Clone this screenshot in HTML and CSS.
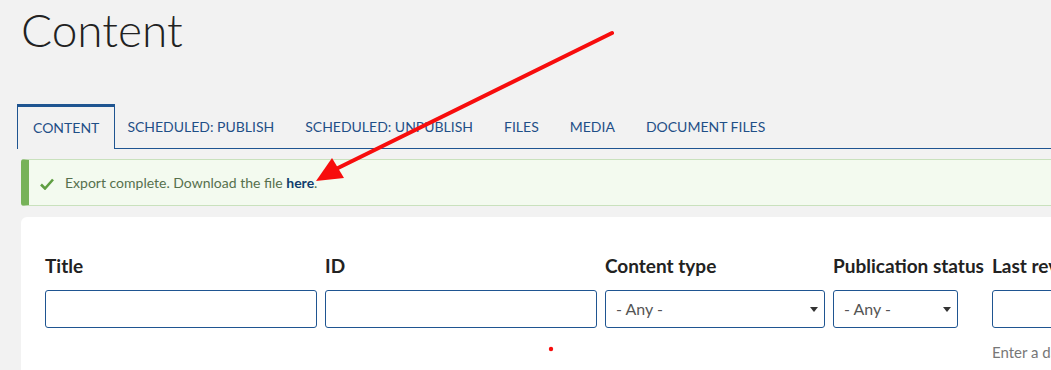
FILE: index.html
```html
<!DOCTYPE html>
<html lang="en">
<head>
    <meta charset="UTF-8">
    <meta name="viewport" content="width=device-width, initial-scale=1.0">
    <title>Content</title>
    <link rel="stylesheet" href="styles.css">
</head>
<body>
    <div class="page">
        <h1 class="page-title">Content</h1>

        <nav class="tabs">
            <a class="tab active" href="#">Content</a>
            <a class="tab" href="#">Scheduled: Publish</a>
            <a class="tab" href="#">Scheduled: Unpublish</a>
            <a class="tab" href="#">Files</a>
            <a class="tab" href="#">Media</a>
            <a class="tab" href="#">Document files</a>
        </nav>

        <div class="message">
            <svg class="check" width="14" height="12" viewBox="0 0 14 12">
                <path d="M1 6.5 L5 10.5 L13 1.5" fill="none" stroke="#5f9e42" stroke-width="2.6"/>
            </svg>
            <span>Export complete. Download the file <a href="#">here</a>.</span>
        </div>

        <div class="card">
            <div class="filters">
                <div class="field">
                    <label>Title</label>
                    <input type="text" class="w-title">
                </div>
                <div class="field">
                    <label>ID</label>
                    <input type="text" class="w-title">
                </div>
                <div class="field">
                    <label>Content type</label>
                    <div class="select w-type">- Any -</div>
                </div>
                <div class="field">
                    <label>Publication status</label>
                    <div class="select w-status">- Any -</div>
                </div>
                <div class="field">
                    <label>Last revised</label>
                    <input type="text" class="w-date">
                    <div class="hint">Enter a date</div>
                </div>
            </div>
        </div>

        <!-- annotation drawn over the screenshot -->
        <svg class="annotation" width="1051" height="370">
            <line x1="612" y1="33" x2="336" y2="169" stroke="#f70d0d" stroke-width="4" stroke-linecap="round"/>
            <polygon points="316,181 332,158 344,178" fill="#f70d0d"/>
            <circle cx="551" cy="349" r="2.2" fill="#f70d0d"/>
        </svg>
    </div>
</body>
</html>
```

FILE: styles.css
```css
body {
    margin: 0;
    background-color: #f2f2f2;
    font-family: 'Lato', sans-serif;
    color: #222;
    overflow: hidden;
}

.page {
    position: relative;
    height: 370px;
    overflow: hidden;
}

.page-title {
    margin: 0;
    padding: 2px 0 0 21px;
    font-size: 46px;
    font-weight: 300;
    line-height: 56px;
    color: #222;
}

.tabs {
    display: flex;
    margin: 46px 0 0 17px;
    border-bottom: 1px solid #1f5591;
}

.tab {
    padding: 0 19px 0 12px;
    height: 44px;
    line-height: 46px;
    font-size: 14px;
    text-transform: uppercase;
    text-decoration: none;
    color: #1f4f87;
    white-space: nowrap;
}

.tab.active {
    border: 1px solid #1f5591;
    border-top: 3px solid #1f5591;
    border-bottom: none;
    height: 42px;
    margin-bottom: -1px;
    background-color: #f2f2f2;
    padding: 0 15px;
    line-height: 42px;
}

.message {
    display: flex;
    align-items: center;
    gap: 11px;
    margin: 10px 0 0 21px;
    height: 45px;
    padding-left: 11px;
    background-color: #f3faef;
    border: 1px solid #c9e1bd;
    border-left: 8px solid #77b259;
    border-right: none;
    border-radius: 3px 0 0 3px;
    font-size: 14px;
    color: #56704d;
}

.message a {
    color: #0f3d6d;
    font-weight: 700;
    text-decoration: none;
}

.check {
    margin-top: 2px;
}

.card {
    margin: 11px 0 0 21px;
    height: 200px;
    background-color: white;
    border-radius: 6px 0 0 0;
    padding: 37px 0 0 24px;
}

.filters {
    display: flex;
    gap: 8px;
}

.field {
    display: flex;
    flex-direction: column;
    flex-shrink: 0;
}

.field label {
    font-size: 19px;
    font-weight: 700;
    line-height: 24px;
    margin-bottom: 12px;
    white-space: nowrap;
}

input, .select {
    box-sizing: border-box;
    height: 38px;
    border: 1px solid #1f5591;
    border-radius: 3px;
    background-color: white;
    font-family: 'Lato', sans-serif;
}

.w-title {
    width: 272px;
}

.w-type {
    width: 220px;
}

.w-status {
    width: 125px;
}

.w-date {
    width: 200px;
}

.select {
    position: relative;
    padding-left: 10px;
    line-height: 36px;
    font-size: 16px;
    color: #555;
}

.select::after {
    content: "";
    position: absolute;
    right: 6px;
    top: 16px;
    border-left: 4px solid transparent;
    border-right: 4px solid transparent;
    border-top: 5px solid #333;
}

.hint {
    margin-top: 15px;
    font-size: 15px;
    color: #777;
    white-space: nowrap;
}

.annotation {
    position: absolute;
    left: 0;
    top: 0;
    pointer-events: none;
}
```
